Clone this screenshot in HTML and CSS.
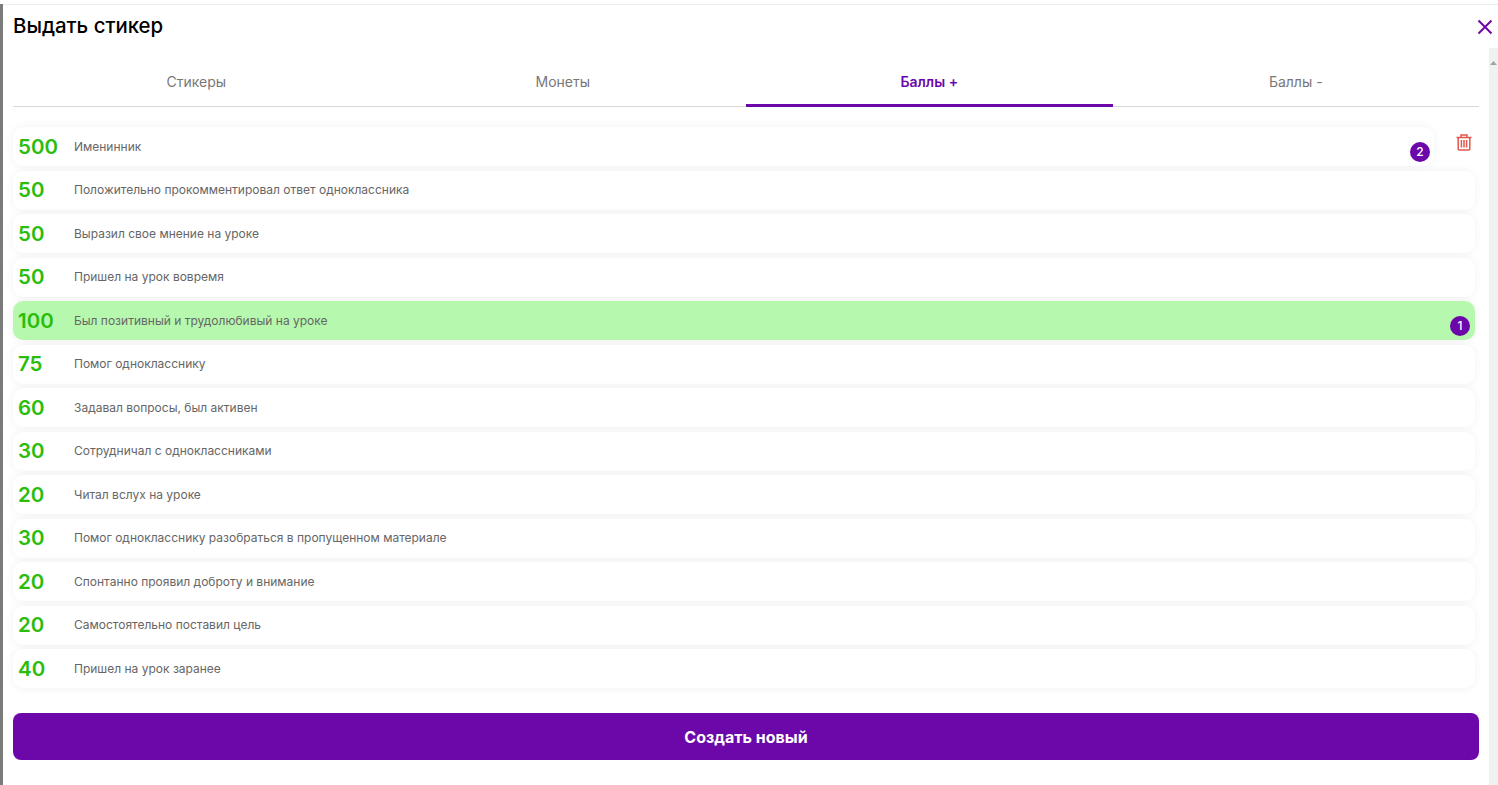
FILE: index.html
```html
<!DOCTYPE html>
<html lang="en">
<head>
    <meta charset="UTF-8">
    <title>Выдать стикер</title>
    <link rel="stylesheet" href="styles.css">
</head>
<body>
<div class="page">
    <div class="side"></div>
    <div class="modal">
        <div class="modal-head">
            <h2 class="title">Выдать стикер</h2>
            <button class="close">
                <svg width="16" height="16" viewBox="0 0 16 16"><path d="M1.5 1.5L14.5 14.5M14.5 1.5L1.5 14.5" stroke="#6c08aa" stroke-width="2" fill="none"/></svg>
            </button>
        </div>
        <div class="modal-main">
            <div class="content">
                <ul class="tabs">
                    <li class="tab">Стикеры</li>
                    <li class="tab">Монеты</li>
                    <li class="tab active">Баллы +</li>
                    <li class="tab">Баллы -</li>
                </ul>
                <ul class="list">
                    <li class="row-wrap">
                        <div class="item short">
                            <span class="points">500</span>
                            <span class="name">Именинник</span>
                            <span class="badge">2</span>
                        </div>
                        <button class="trash">
                            <svg width="16" height="17" viewBox="0 0 16 17" fill="none" stroke="#e2574c" stroke-width="1.5">
                                <path d="M0.5 3.5H15.5"/>
                                <path d="M5 3.5V1H11V3.5"/>
                                <path d="M2.2 3.5V15Q2.2 16 3.2 16H12.8Q13.8 16 13.8 15V3.5"/>
                                <path d="M5.4 6V13.6M8 6V13.6M10.6 6V13.6"/>
                            </svg>
                        </button>
                    </li>
                    <li class="item"><span class="points">50</span><span class="name">Положительно прокомментировал ответ одноклассника</span></li>
                    <li class="item"><span class="points">50</span><span class="name">Выразил свое мнение на уроке</span></li>
                    <li class="item"><span class="points">50</span><span class="name">Пришел на урок вовремя</span></li>
                    <li class="item selected"><span class="points">100</span><span class="name">Был позитивный и трудолюбивый на уроке</span><span class="badge">1</span></li>
                    <li class="item"><span class="points">75</span><span class="name">Помог однокласснику</span></li>
                    <li class="item"><span class="points">60</span><span class="name">Задавал вопросы, был активен</span></li>
                    <li class="item"><span class="points">30</span><span class="name">Сотрудничал с одноклассниками</span></li>
                    <li class="item"><span class="points">20</span><span class="name">Читал вслух на уроке</span></li>
                    <li class="item"><span class="points">30</span><span class="name">Помог однокласснику разобраться в пропущенном материале</span></li>
                    <li class="item"><span class="points">20</span><span class="name">Спонтанно проявил доброту и внимание</span></li>
                    <li class="item"><span class="points">20</span><span class="name">Самостоятельно поставил цель</span></li>
                    <li class="item"><span class="points">40</span><span class="name">Пришел на урок заранее</span></li>
                </ul>
                <button class="create">Создать новый</button>
            </div>
            <div class="scrollbar">
                <svg class="arrow" width="7" height="4" viewBox="0 0 7 4"><path d="M3.5 0L7 4H0Z" fill="#a3a3a3"/></svg>
            </div>
        </div>
    </div>
</div>
</body>
</html>
```

FILE: styles.css
```css
* {
    padding: 0;
    margin: 0;
    box-sizing: border-box;
}

ul {
    list-style: none;
}

html, body {
    height: 100%;
    overflow: hidden;
}

body {
    background-color: #fff;
    padding-top: 4px;
    font-family: "Inter", "Noto Sans", sans-serif;
}

button {
    border: 0;
    background-color: transparent;
    cursor: pointer;
    font-family: inherit;
}

.page {
    height: 100%;
    display: flex;
}

.side {
    width: 3px;
    background-color: #7b7b7b;
}

.modal {
    flex: 1;
    background-color: #fff;
    border-top: 1px solid #ececec;
    display: flex;
    flex-direction: column;
}

.modal-head {
    height: 43px;
    padding: 0 5px 2px 10px;
    display: flex;
    align-items: center;
    justify-content: space-between;
}

.title {
    font-size: 20.4px;
    font-weight: 500;
    color: #000;
}

.close {
    display: flex;
    margin-top: 2px;
}

.modal-main {
    flex: 1;
    display: flex;
    min-height: 0;
}

.content {
    flex: 1;
    padding: 0 10px;
}

.tabs {
    display: flex;
    border-bottom: 1px solid #d9d9d9;
    height: 59px;
}

.tab {
    flex: 1;
    height: 58px;
    padding-top: 24px;
    text-align: center;
    font-size: 14px;
    line-height: 20px;
    color: #777;
}

.tab.active {
    color: #6c08aa;
    font-weight: 600;
    border-bottom: 3px solid #6c08aa;
    height: 59px;
}

.list {
    margin: 20px 4px 0 0;
}

.row-wrap {
    display: flex;
    align-items: flex-start;
    margin-bottom: 4.5px;
}

.item {
    position: relative;
    height: 39px;
    display: flex;
    align-items: center;
    padding: 0 0 1px 5px;
    margin-bottom: 4.5px;
    background-color: #fff;
    border-radius: 10px;
    box-shadow: 0 0 8px rgba(0, 0, 0, 0.06);
}

.item.short {
    flex: 1;
    margin-bottom: 0;
}

.item.selected {
    background-color: #b6f9ae;
}

.points {
    width: 56px;
    font-size: 20.5px;
    font-weight: 600;
    color: #2cbd0c;
}

.name {
    font-size: 12px;
    color: #666;
}

.badge {
    position: absolute;
    right: 5px;
    bottom: 4px;
    width: 20px;
    height: 20px;
    border-radius: 50%;
    background-color: #6c08aa;
    color: #fff;
    font-size: 12px;
    font-weight: 500;
    line-height: 20px;
    text-align: center;
}

.short .badge {
    right: 4px;
}

.trash {
    width: 41px;
    padding: 7px 0 0 22px;
    display: flex;
}

.create {
    display: block;
    width: 100%;
    height: 47px;
    margin-top: 25px;
    border-radius: 8px;
    background-color: #6c08aa;
    color: #fff;
    font-size: 16px;
    font-weight: 700;
}

.scrollbar {
    width: 9px;
    background-color: #f1f1f1;
    padding-top: 13px;
    display: flex;
    justify-content: center;
    align-items: flex-start;
}
```
